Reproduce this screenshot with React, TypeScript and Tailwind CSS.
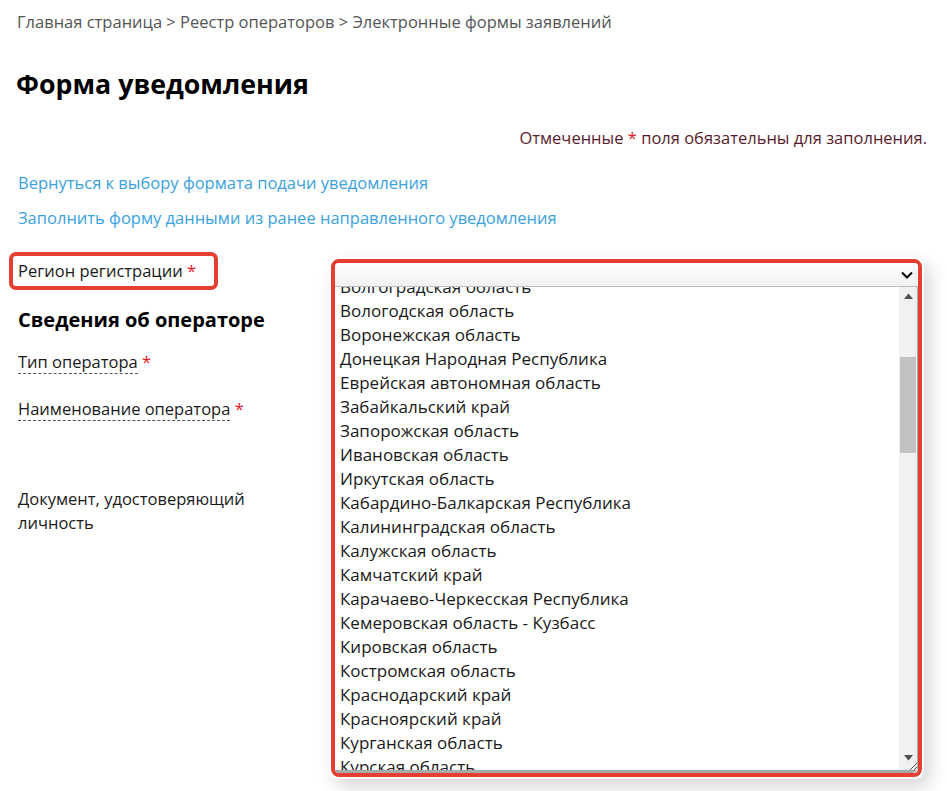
import React from "react";

const regions = [
  "Волгоградская область",
  "Вологодская область",
  "Воронежская область",
  "Донецкая Народная Республика",
  "Еврейская автономная область",
  "Забайкальский край",
  "Запорожская область",
  "Ивановская область",
  "Иркутская область",
  "Кабардино-Балкарская Республика",
  "Калининградская область",
  "Калужская область",
  "Камчатский край",
  "Карачаево-Черкесская Республика",
  "Кемеровская область - Кузбасс",
  "Кировская область",
  "Костромская область",
  "Краснодарский край",
  "Красноярский край",
  "Курганская область",
  "Курская область",
];

const Star = () => <span className="text-[#e8141e]">*</span>;

export default function App() {
  return (
    <div
      className="min-h-[791px] w-[947px] overflow-hidden bg-white text-[#1a1a1a]"
      style={{ fontFamily: '"Open Sans", "Noto Sans", sans-serif' }}
    >
      <div className="pl-[16px] pr-[20px]">
        <div className="pt-[10px] text-[16.5px] leading-6 text-[#555] pl-[1px]">
          Главная страница &gt; Реестр операторов &gt; Электронные формы заявлений
        </div>
        <h1 className="mt-[34px] text-[26.75px] font-bold leading-8 text-black">Форма уведомления</h1>
        <div className="mt-[26px] text-right text-[16.5px] leading-6 text-[#5a1c2c]">
          Отмеченные <Star /> поля обязательны для заполнения.
        </div>
        <div className="mt-[21px] pl-[2px] text-[16.5px] leading-6 text-[#3ba2dd]">
          Вернуться к выбору формата подачи уведомления
        </div>
        <div className="mt-[11px] pl-[2px] text-[16.5px] leading-6 text-[#3ba2dd]">
          Заполнить форму данными из ранее направленного уведомления
        </div>
      </div>

      <div className="mt-[22px] grid grid-cols-[322px_591px] pl-[9px]">
        <div>
          <div className="flex h-[38px] w-[209px] items-center rounded-[7px] border-[4px] border-[#e53f31] pl-[5px] text-[16.5px] text-[#1a1a1a]">
            Регион регистрации&nbsp;<Star />
          </div>
          <div className="pl-[9px]">
            <div className="mt-[16px] text-[20px] font-bold leading-7 text-black">Сведения об операторе</div>
            <div className="mt-[16px] text-[16.5px] leading-6">
              <span className="border-b border-dashed border-[#555]">Тип оператора</span> <Star />
            </div>
            <div className="mt-[23px] text-[16.5px] leading-6">
              <span className="border-b border-dashed border-[#555]">Наименование оператора</span> <Star />
            </div>
            <div className="mt-[66px] w-[240px] text-[16.5px] leading-6">Документ, удостоверяющий личность</div>
          </div>
        </div>

        <div className="relative mt-[7px] h-[518px] w-[591px]">
          <div className="pointer-events-none absolute -inset-[2px] rounded-[9px] shadow-[6px_8px_18px_rgba(0,0,0,0.16)]" />
          <div className="relative flex h-full flex-col overflow-hidden rounded-[8px] border-[4px] border-[#e53f31] bg-white">
            <div className="flex h-[24px] shrink-0 items-center justify-end border-b border-[#bdbdbd] bg-gradient-to-b from-white to-[#f1f1f1] pr-[4px]">
              <svg width="14" height="10" viewBox="0 0 14 10">
                <path d="M2 2.5 L7 7.5 L12 2.5" fill="none" stroke="#111" strokeWidth="2.2" />
              </svg>
            </div>
            <div className="relative flex min-h-0 flex-1 rounded-br-[6px] border-b-[3px] border-r border-[#a9a9a9]">
              <div className="min-h-0 flex-1 overflow-hidden">
                <div className="-mt-[12px] pl-[5px]">
                  {regions.map((r) => (
                    <div key={r} className="h-[24px] text-[17px] leading-6 text-[#1a1a1a] whitespace-nowrap">
                      {r}
                    </div>
                  ))}
                </div>
              </div>
              <div className="relative flex w-[18px] shrink-0 flex-col bg-[#f1f1f1]">
                <div className="flex h-[17px] items-center justify-center">
                  <svg width="9" height="6" viewBox="0 0 9 6">
                    <path d="M0 6 L4.5 0.5 L9 6 Z" fill="#505050" />
                  </svg>
                </div>
                <div className="mx-[1px] mt-[53px] h-[96px] bg-[#c1c1c1]" />
                <div className="flex-1" />
                <div className="flex h-[17px] items-center justify-center">
                  <svg width="9" height="6" viewBox="0 0 9 6">
                    <path d="M0 0 L4.5 5.5 L9 0 Z" fill="#505050" />
                  </svg>
                </div>
                <div className="h-[4px]" />
                <svg className="absolute bottom-0 right-0" width="8" height="8" viewBox="0 0 8 8">
                  <path d="M1 8 L8 1 M5 8 L8 5" stroke="#555" strokeWidth="1" />
                </svg>
              </div>
            </div>
          </div>
        </div>
      </div>
    </div>
  );
}
